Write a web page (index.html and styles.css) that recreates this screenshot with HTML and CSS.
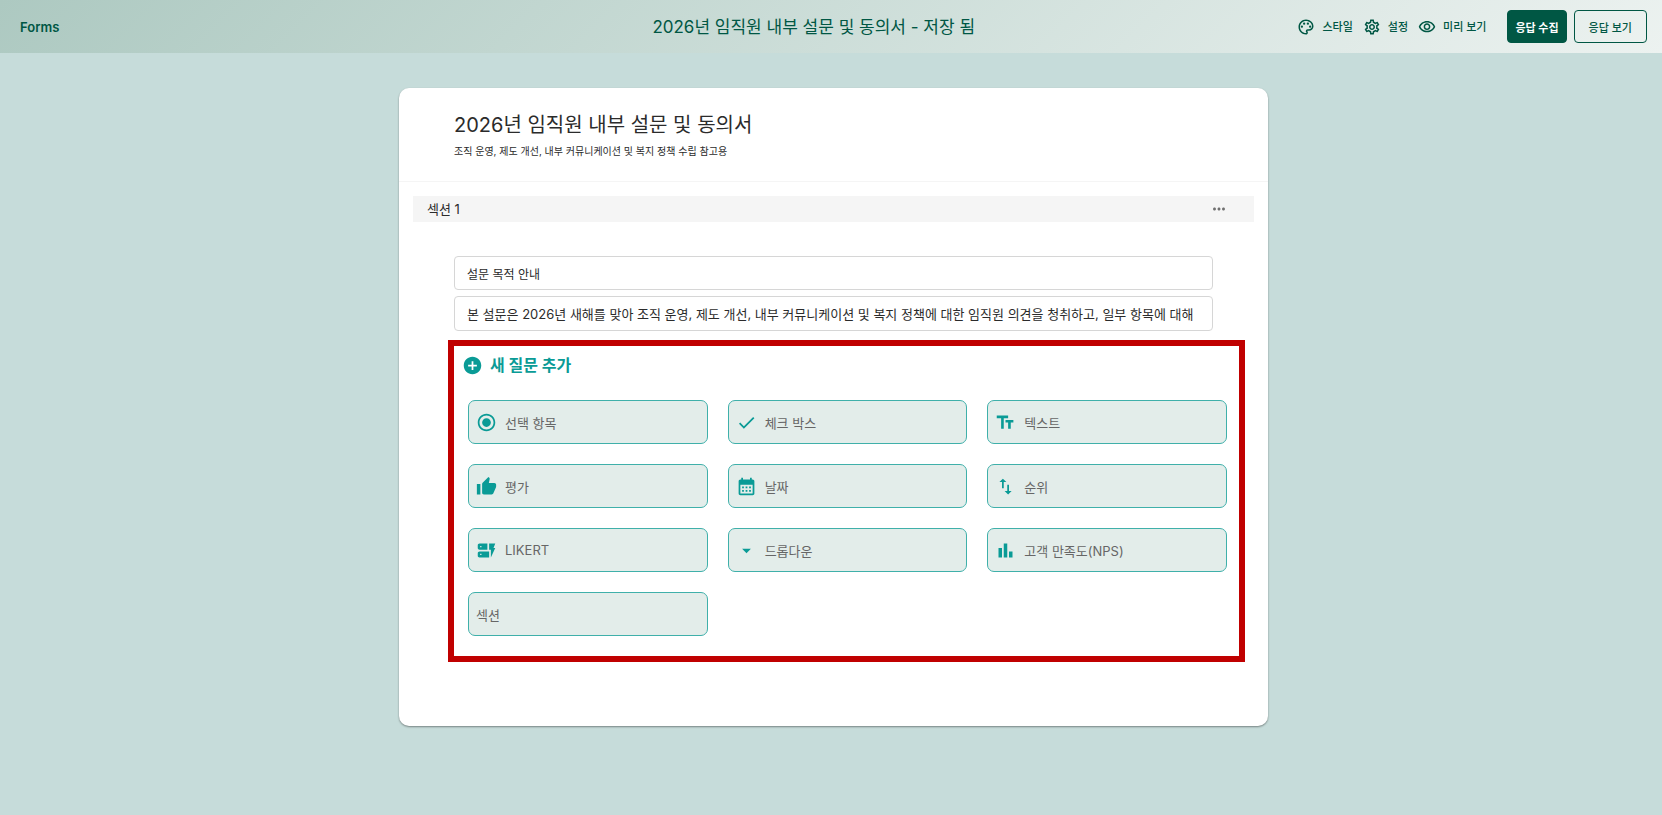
FILE: index.html
```html
<!DOCTYPE html>
<html lang="ko">
<head>
    <meta charset="UTF-8">
    <meta name="viewport" content="width=device-width, initial-scale=1.0">
    <title>Forms</title>
    <link rel="stylesheet" href="styles.css">
</head>
<body>
    <header class="topbar">
        <a href="#" class="brand">Forms</a>
        <h1 class="doc-title">2026년 임직원 내부 설문 및 동의서 - 저장 됨</h1>
        <div class="actions">
            <button type="button" class="tool">
                <svg class="tool-icon" viewBox="0 0 24 24"><path d="M12 22C6.49 22 2 17.51 2 12S6.49 2 12 2s10 4.04 10 9c0 3.31-2.69 6-6 6h-1.77c-.28 0-.5.22-.5.5 0 .12.05.23.13.33.41.47.64 1.06.64 1.67 0 1.38-1.12 2.5-2.5 2.5m0-18c-4.41 0-8 3.59-8 8s3.59 8 8 8c.28 0 .5-.22.5-.5 0-.16-.08-.28-.14-.35-.41-.46-.63-1.05-.63-1.65 0-1.38 1.12-2.5 2.5-2.5H16c2.21 0 4-1.79 4-4 0-3.86-3.59-7-8-7"/><circle cx="6.5" cy="11.5" r="1.5"/><circle cx="9.5" cy="7.5" r="1.5"/><circle cx="14.5" cy="7.5" r="1.5"/><circle cx="17.5" cy="11.5" r="1.5"/></svg>
                스타일
            </button>
            <button type="button" class="tool">
                <svg class="tool-icon" viewBox="0 0 24 24"><path d="M19.43 12.98c.04-.32.07-.64.07-.98s-.03-.66-.07-.98l2.11-1.65c.19-.15.24-.42.12-.64l-2-3.46c-.09-.16-.26-.25-.44-.25-.06 0-.12.01-.17.03l-2.49 1c-.52-.4-1.08-.73-1.69-.98l-.38-2.65C14.46 2.18 14.25 2 14 2h-4c-.25 0-.46.18-.49.42l-.38 2.65c-.61.25-1.17.59-1.69.98l-2.49-1c-.06-.02-.12-.03-.18-.03-.17 0-.34.09-.43.25l-2 3.46c-.13.22-.07.49.12.64l2.11 1.65c-.04.32-.07.65-.07.98s.03.66.07.98l-2.11 1.65c-.19.15-.24.42-.12.64l2 3.46c.09.16.26.25.44.25.06 0 .12-.01.17-.03l2.49-1c.52.4 1.08.73 1.69.98l.38 2.65c.03.24.24.42.49.42h4c.25 0 .46-.18.49-.42l.38-2.65c.61-.25 1.17-.59 1.69-.98l2.49 1c.06.02.12.03.18.03.17 0 .34-.09.43-.25l2-3.46c.12-.22.07-.49-.12-.64zm-1.98-1.71c.04.31.05.52.05.73s-.02.43-.05.73l-.14 1.13.89.7 1.08.84-.7 1.21-1.27-.51-1.04-.42-.9.68c-.43.32-.84.56-1.25.73l-1.06.43-.16 1.13-.2 1.35h-1.4l-.19-1.35-.16-1.13-1.06-.43c-.43-.18-.83-.41-1.23-.71l-.91-.7-1.06.43-1.27.51-.7-1.21 1.08-.84.89-.7-.14-1.13c-.03-.31-.05-.54-.05-.74s.02-.43.05-.73l.14-1.13-.89-.7-1.08-.84.7-1.21 1.27.51 1.04.42.9-.68c.43-.32.84-.56 1.25-.73l1.06-.43.16-1.13.2-1.35h1.39l.19 1.35.16 1.13 1.06.43c.43.18.83.41 1.23.71l.91.7 1.06-.43 1.27-.51.7 1.21-1.07.85-.89.7zM12 8c-2.21 0-4 1.79-4 4s1.79 4 4 4 4-1.79 4-4-1.79-4-4-4m0 6c-1.1 0-2-.9-2-2s.9-2 2-2 2 .9 2 2-.9 2-2 2"/></svg>
                설정
            </button>
            <button type="button" class="tool">
                <svg class="tool-icon" viewBox="0 0 24 24"><path d="M12 6c3.79 0 7.17 2.13 8.82 5.5C19.17 14.87 15.79 17 12 17s-7.17-2.13-8.82-5.5C4.83 8.13 8.21 6 12 6m0-2C7 4 2.73 7.11 1 11.5 2.73 15.89 7 19 12 19s9.27-3.11 11-7.5C21.27 7.11 17 4 12 4m0 5c1.38 0 2.5 1.12 2.5 2.5S13.38 14 12 14s-2.5-1.12-2.5-2.5S10.62 9 12 9m0-2c-2.48 0-4.5 2.02-4.5 4.5S9.52 16 12 16s4.5-2.02 4.5-4.5S14.48 7 12 7"/></svg>
                미리 보기
            </button>
            <div class="action-buttons">
                <button type="button" class="btn btn-primary">응답 수집</button>
                <button type="button" class="btn btn-outline">응답 보기</button>
            </div>
        </div>
    </header>

    <main class="page">
        <div class="card">
            <div class="card-head">
                <h2 class="form-title">2026년 임직원 내부 설문 및 동의서</h2>
                <p class="form-desc">조직 운영, 제도 개선, 내부 커뮤니케이션 및 복지 정책 수립 참고용</p>
            </div>

            <div class="card-body">
                <div class="section-bar">
                    <h3 class="section-name">섹션 1</h3>
                    <button type="button" class="more" aria-label="더보기">
                        <svg class="more-icon" viewBox="0 0 24 24"><path d="M6 10c-1.1 0-2 .9-2 2s.9 2 2 2 2-.9 2-2-.9-2-2-2m12 0c-1.1 0-2 .9-2 2s.9 2 2 2 2-.9 2-2-.9-2-2-2m-6 0c-1.1 0-2 .9-2 2s.9 2 2 2 2-.9 2-2-.9-2-2-2"/></svg>
                    </button>
                </div>

                <div class="section-fields">
                    <input type="text" class="field field-title" aria-label="섹션 제목" value="설문 목적 안내">
                    <input type="text" class="field" aria-label="섹션 설명" value="본 설문은 2026년 새해를 맞아 조직 운영, 제도 개선, 내부 커뮤니케이션 및 복지 정책에 대한 임직원 의견을 청취하고, 일부 항목에 대해">
                </div>

                <section class="add-panel">
                    <h3 class="add-title">
                        <svg class="icon" viewBox="0 0 24 24"><path d="M12 2C6.48 2 2 6.48 2 12s4.48 10 10 10 10-4.48 10-10S17.52 2 12 2m5 11h-4v4h-2v-4H7v-2h4V7h2v4h4z"/></svg>
                        새 질문 추가
                    </h3>
                    <div class="type-grid">
                        <button type="button" class="type">
                            <svg class="icon" viewBox="0 0 24 24"><path d="M12 7c-2.76 0-5 2.24-5 5s2.24 5 5 5 5-2.24 5-5-2.24-5-5-5m0-5C6.48 2 2 6.48 2 12s4.48 10 10 10 10-4.48 10-10S17.52 2 12 2m0 18c-4.42 0-8-3.58-8-8s3.58-8 8-8 8 3.58 8 8-3.58 8-8 8"/></svg>
                            선택 항목
                        </button>
                        <button type="button" class="type">
                            <svg class="icon" viewBox="0 0 24 24"><path d="M9 16.17 4.83 12l-1.42 1.41L9 19 21 7l-1.41-1.41z"/></svg>
                            체크 박스
                        </button>
                        <button type="button" class="type">
                            <svg class="icon" viewBox="0 0 24 24"><path d="M2 4v3h5v12h3V7h5V4zm19 5h-9v3h3v7h3v-7h3z"/></svg>
                            텍스트
                        </button>
                        <button type="button" class="type">
                            <svg class="icon" viewBox="0 0 24 24"><path d="M1 21h4V9H1zm22-11c0-1.1-.9-2-2-2h-6.31l.95-4.57.03-.32c0-.41-.17-.79-.44-1.06L14.17 1 7.59 7.59C7.22 7.95 7 8.45 7 9v10c0 1.1.9 2 2 2h9c.83 0 1.54-.5 1.84-1.22l3.02-7.05c.09-.23.14-.47.14-.73z"/></svg>
                            평가
                        </button>
                        <button type="button" class="type">
                            <svg class="icon" viewBox="0 0 24 24"><path d="M19 4h-1V2h-2v2H8V2H6v2H5c-1.11 0-1.99.9-1.99 2L3 20c0 1.1.89 2 2 2h14c1.1 0 2-.9 2-2V6c0-1.1-.9-2-2-2m0 16H5V10h14zM9 14H7v-2h2zm4 0h-2v-2h2zm4 0h-2v-2h2zm-8 4H7v-2h2zm4 0h-2v-2h2zm4 0h-2v-2h2z"/></svg>
                            날짜
                        </button>
                        <button type="button" class="type">
                            <svg class="icon" viewBox="0 0 24 24"><path d="M16 17.01V10h-2v7.01h-3L15 21l4-3.99zM9 3 5 6.99h3V14h2V6.99h3z"/></svg>
                            순위
                        </button>
                        <button type="button" class="type">
                            <svg class="icon" viewBox="0 0 24 24"><path d="M17 20v-9h-2V4h7l-2 5h2zm-2-7v7H4c-1.1 0-2-.9-2-2v-3c0-1.1.9-2 2-2zm-8.75 2.75h-1.5v1.5h1.5zM13 4v7H4c-1.1 0-2-.9-2-2V6c0-1.1.9-2 2-2zM6.25 6.75h-1.5v1.5h1.5z"/></svg>
                            LIKERT
                        </button>
                        <button type="button" class="type">
                            <svg class="icon" viewBox="0 0 24 24"><path d="m7 10 5 5 5-5z"/></svg>
                            드롭다운
                        </button>
                        <button type="button" class="type">
                            <svg class="icon" viewBox="0 0 24 24"><path d="M4 9h4v11H4zm12 4h4v7h-4zm-6-9h4v16h-4z"/></svg>
                            고객 만족도(NPS)
                        </button>
                        <button type="button" class="type">섹션</button>
                    </div>
                </section>
            </div>
        </div>
    </main>
</body>
</html>
```
FILE: styles.css
```css
* {
    margin: 0;
    padding: 0;
    box-sizing: border-box;
}

body {
    font-family: Inter, "Noto Sans CJK KR", sans-serif;
    background-color: #c6dcda;
    color: #2b2b2b;
    min-height: 100vh;
}

button,
input {
    font-family: inherit;
}

button {
    cursor: pointer;
}

svg {
    fill: currentColor;
    flex-shrink: 0;
}

/* Top bar */
.topbar {
    display: grid;
    grid-template-columns: 16fr auto 17fr;
    align-items: center;
    height: 53px;
    padding: 0 15px 0 20px;
    background: linear-gradient(135deg, #adc9c1 0%, #ecf2f0 100%);
    color: #005744;
}

.brand {
    font-size: 13px;
    font-weight: 600;
    color: inherit;
    text-decoration: none;
}

.doc-title {
    font-size: 17px;
    font-weight: 400;
    line-height: 24px;
}

.actions {
    display: flex;
    justify-content: flex-end;
    align-items: center;
    gap: 10px;
}

.tool {
    display: flex;
    align-items: center;
    gap: 7px;
    border: none;
    background: none;
    color: inherit;
    font-size: 11px;
    font-weight: 500;
    line-height: 18px;
}

.tool-icon {
    width: 18px;
    height: 18px;
}

.action-buttons {
    display: flex;
    gap: 7px;
    margin-left: 11px;
}

.btn {
    height: 33px;
    border: 1px solid #005744;
    border-radius: 4px;
    font-size: 11px;
    white-space: nowrap;
}

.btn-primary {
    padding: 0 7px;
    background-color: #005744;
    color: #fff;
    font-weight: 700;
}

.btn-outline {
    padding: 0 14px;
    background: none;
    color: #005744;
    font-weight: 500;
}

/* Form card */
.page {
    padding: 35px 20px 40px 25px;
}

.card {
    max-width: 869px;
    margin: 0 auto;
    background-color: #fff;
    border-radius: 10px;
    box-shadow: 0 1px 2px rgba(0, 0, 0, 0.4);
}

.card-head {
    padding: 21px 55px;
    border-bottom: 1px solid #f5f5f5;
}

.form-title {
    font-size: 20px;
    font-weight: 400;
    line-height: 32px;
}

.form-desc {
    margin-top: 1px;
    font-size: 10px;
    line-height: 18px;
}

.card-body {
    padding: 14px 14px 64px;
}

.section-bar {
    display: flex;
    justify-content: space-between;
    align-items: center;
    height: 26px;
    padding: 0 26px 0 14px;
    background-color: #f5f5f5;
}

.section-name {
    font-size: 13px;
    font-weight: 400;
    line-height: 20px;
}

.more {
    display: flex;
    border: none;
    background: none;
    color: #707070;
}

.more-icon {
    width: 18px;
    height: 18px;
}

.section-fields {
    display: flex;
    flex-direction: column;
    gap: 6px;
    padding: 34px 41px 9px;
}

.field {
    width: 100%;
    height: 35px;
    padding: 0 12px;
    border: 1px solid #d6d6d6;
    border-radius: 4px;
    background-color: #fff;
    color: #2b2b2b;
    font-size: 13px;
}

.field-title {
    height: 34px;
    font-size: 12px;
}

/* Question type picker */
.add-panel {
    margin: 0 9px 0 35px;
    padding: 8px 12px 20px 8px;
    border: 6px solid #c00000;
}

.add-title {
    display: flex;
    align-items: center;
    gap: 7px;
    color: #0a9b96;
    font-size: 16px;
    font-weight: 700;
    line-height: 22px;
}

.type-grid {
    display: grid;
    grid-template-columns: repeat(3, 1fr);
    gap: 20px;
    padding: 24px 0 0 6px;
}

.type {
    display: flex;
    align-items: center;
    gap: 8px;
    height: 44px;
    padding: 0 7px;
    border: 1px solid #3fb0aa;
    border-radius: 7px;
    background-color: #e3edea;
    color: #666;
    font-size: 13px;
}

.icon {
    width: 21px;
    height: 21px;
    color: #0a9b96;
}
```
